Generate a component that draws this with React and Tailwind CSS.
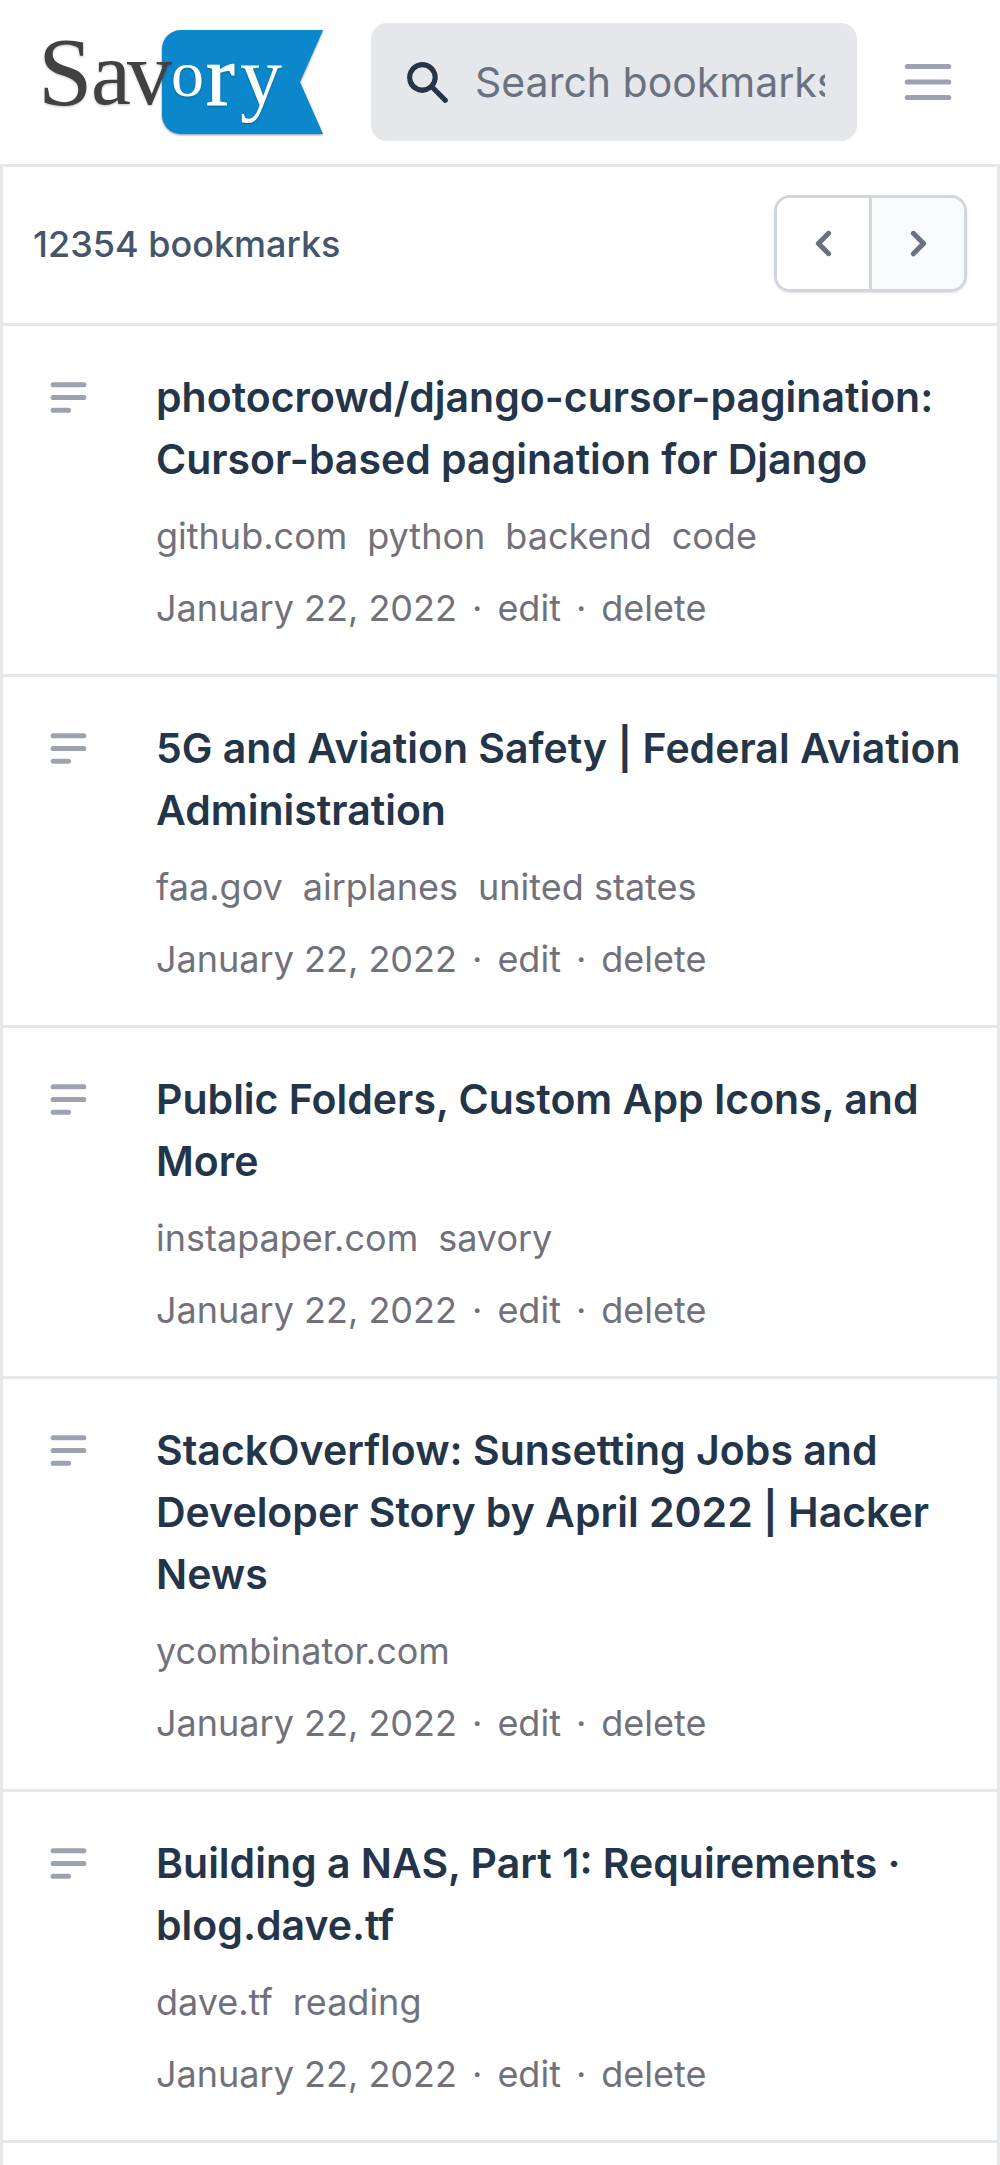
const bookmarks = [
  {
    title: 'photocrowd/django-cursor-pagination: Cursor-based pagination for Django',
    tags: ['github.com', 'python', 'backend', 'code'],
  },
  {
    title: '5G and Aviation Safety | Federal Aviation Administration',
    tags: ['faa.gov', 'airplanes', 'united states'],
  },
  {
    title: 'Public Folders, Custom App Icons, and More',
    tags: ['instapaper.com', 'savory'],
  },
  {
    title: 'StackOverflow: Sunsetting Jobs and Developer Story by April 2022 | Hacker News',
    tags: ['ycombinator.com'],
  },
  {
    title: 'Building a NAS, Part 1: Requirements · blog.dave.tf',
    tags: ['dave.tf', 'reading'],
  },
];

function Logo() {
  return (
    <svg viewBox="-16 -14 304 138" className="h-[138px] w-[304px] overflow-visible" role="img" aria-label="Savory">
      <path
        d="M141 3H283L260 55L283 107H141A19 19 0 0 1 122 88V22A19 19 0 0 1 141 3Z"
        fill="#0b88cb"
        className="drop-shadow-[0_1px_1px_rgba(0,0,0,0.45)]"
      />
      <g fontFamily="Liberation Serif, serif" className="drop-shadow-[0_1px_1px_rgba(0,0,0,0.25)]">
        <g fill="#414141">
          <text x="-2" y="78" fontSize="98">S</text>
          <text x="51" y="77" fontSize="90">a</text>
          <text x="87" y="77" fontSize="90">v</text>
        </g>
        <g fill="#ffffff">
          <text x="131" y="69" fontSize="66">o</text>
          <text x="166" y="78" fontSize="86" stroke="#ffffff">r</text>
          <text x="200" y="78" fontSize="84">y</text>
        </g>
      </g>
    </svg>
  );
}

function SearchIcon() {
  return (
    <svg viewBox="0 0 20 20" fill="currentColor" className="size-[51px] shrink-0" aria-hidden="true">
      <path
        fillRule="evenodd"
        clipRule="evenodd"
        d="M8 4a4 4 0 100 8 4 4 0 000-8zM2 8a6 6 0 1110.89 3.476l4.817 4.817a1 1 0 01-1.414 1.414l-4.816-4.816A6 6 0 012 8z"
      />
    </svg>
  );
}

function MenuIcon() {
  return (
    <svg viewBox="0 0 24 24" fill="none" stroke="currentColor" strokeWidth="2" strokeLinecap="round" className="size-[62px]" aria-hidden="true">
      <path d="M4 6h16M4 12h16M4 18h16" />
    </svg>
  );
}

function NoteIcon() {
  return (
    <svg viewBox="0 0 20 20" fill="currentColor" className="size-[51px]" aria-hidden="true">
      <path d="M3 5a1 1 0 011-1h12a1 1 0 110 2H4a1 1 0 01-1-1zM3 10a1 1 0 011-1h12a1 1 0 110 2H4a1 1 0 01-1-1zM3 15a1 1 0 011-1h6a1 1 0 110 2H4a1 1 0 01-1-1z" />
    </svg>
  );
}

function ChevronIcon({ d }) {
  return (
    <svg viewBox="0 0 20 20" fill="currentColor" className="size-[51px]" aria-hidden="true">
      <path fillRule="evenodd" clipRule="evenodd" d={d} />
    </svg>
  );
}

function Bookmark({ title, tags }) {
  return (
    <li className="flex border-b-[3px] border-gray-200 py-10 pr-8 pl-10">
      <div className="flex h-[62px] w-[113px] shrink-0 items-center text-[#9ca3af]">
        <button type="button" aria-label="Show notes">
          <NoteIcon />
        </button>
      </div>
      <div className="min-w-0 flex-1">
        <h2 className="text-[41px] leading-[62px] font-semibold text-[#243449]">
          <a href="#bookmark">{title}</a>
        </h2>
        <div className="mt-5 flex flex-wrap gap-x-5 text-[36px] leading-[52px] text-zinc-500">
          {tags.map((tag) => (
            <a key={tag} href="#tag">{tag}</a>
          ))}
        </div>
        <div className="mt-5 flex flex-wrap gap-x-[15px] text-[36px] leading-[52px] text-zinc-500">
          <time dateTime="2022-01-22">January 22, 2022</time>
          <span>·</span>
          <a href="#edit">edit</a>
          <span>·</span>
          <a href="#delete">delete</a>
        </div>
      </div>
    </li>
  );
}

export default function App() {
  return (
    <div className="flex min-h-screen flex-col bg-white font-['Inter',sans-serif]">
      <header className="flex items-center py-[13px] pr-[41px] pl-6">
        <a href="#home" className="shrink-0">
          <Logo />
        </a>
        <label className="ml-[43px] flex h-[118px] min-w-0 flex-1 items-center gap-[22px] rounded-2xl bg-gray-200 pr-8 pl-[31px] text-[#243449]">
          <SearchIcon />
          <input
            type="text"
            aria-label="Search bookmarks"
            placeholder="Search bookmarks"
            className="w-full min-w-0 flex-1 bg-transparent text-[41px] leading-[62px] outline-none placeholder:text-gray-500"
          />
        </label>
        <button type="button" aria-label="Open menu" className="ml-10 shrink-0 text-[#9ca3af]">
          <MenuIcon />
        </button>
      </header>

      <main className="flex-1 border-x-[3px] border-t-[3px] border-gray-200">
        <div className="flex items-center justify-between border-b-[3px] border-gray-200 px-[30px] pt-7 pb-[31px]">
          <p className="text-[36px] leading-[52px] font-medium text-slate-600">12354 bookmarks</p>
          <nav aria-label="Pagination" className="flex overflow-hidden rounded-2xl border-[3px] border-gray-300 text-gray-500 shadow-sm">
            <button type="button" aria-label="Previous page" className="flex h-[91px] w-[95px] items-center justify-center border-r-[3px] border-gray-300 bg-white">
              <ChevronIcon d="M12.707 5.293a1 1 0 010 1.414L9.414 10l3.293 3.293a1 1 0 01-1.414 1.414l-4-4a1 1 0 010-1.414l4-4a1 1 0 011.414 0z" />
            </button>
            <button type="button" aria-label="Next page" className="flex h-[91px] w-[92px] items-center justify-center bg-slate-50">
              <ChevronIcon d="M7.293 14.707a1 1 0 010-1.414L10.586 10 7.293 6.707a1 1 0 011.414-1.414l4 4a1 1 0 010 1.414l-4 4a1 1 0 01-1.414 0z" />
            </button>
          </nav>
        </div>
        <ul>
          {bookmarks.map((bookmark) => (
            <Bookmark key={bookmark.title} {...bookmark} />
          ))}
        </ul>
      </main>
    </div>
  );
}
